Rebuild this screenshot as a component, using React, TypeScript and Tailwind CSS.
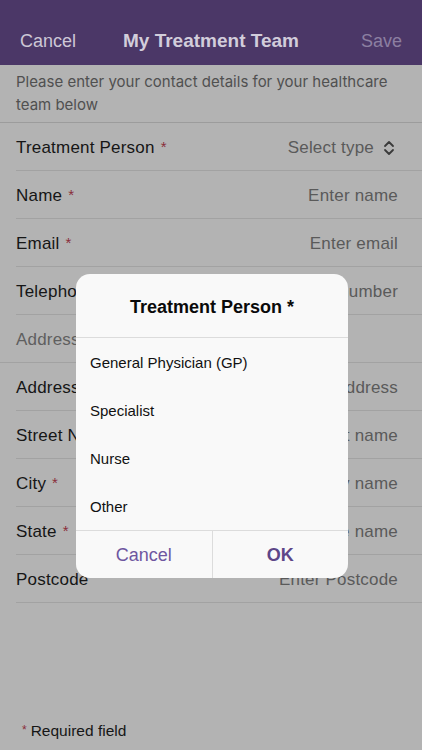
import React from "react";

const font = { fontFamily: '"Liberation Sans", Arial, sans-serif' };
const inter = { fontFamily: 'Inter, "Liberation Sans", Arial, sans-serif' };

function Row({ label, req, placeholder, chevron }: { label: string; req?: boolean; placeholder: string; chevron?: boolean }) {
  return (
    <div className="ml-4 flex h-12 items-center justify-between border-b border-[#a2a2a2] pr-6 pt-[2px]">
      <div className="flex items-center text-[17px] tracking-[0.2px] text-[#161616]">
        <span>{label}</span>
        {req && <span className="ml-[6px] text-[15px] text-[#8a2d3a]">*</span>}
      </div>
      <div className="flex items-center text-[17px] tracking-[0.2px] text-[#5a5a5a]">
        <span>{placeholder}</span>
        {chevron && (
          <svg width="14" height="16" viewBox="0 0 14 16" className="ml-[8px] mr-[2px]">
            <path d="M3 6 L7 2 L11 6 M3 10 L7 14 L11 10" fill="none" stroke="#3a3a3a" strokeWidth="1.8" strokeLinecap="round" strokeLinejoin="round" />
          </svg>
        )}
      </div>
    </div>
  );
}

export default function App() {
  return (
    <div className="relative h-[750px] w-[422px] overflow-hidden bg-[#b3b3b3]" style={font}>
      <div className="grid h-[65px] grid-cols-[1fr_auto_1fr] items-end bg-[#4b3767] px-5 pb-[10px]">
        <span className="justify-self-start text-[18px] text-[#cdc7d6]">Cancel</span>
        <span className="text-[19px] font-bold text-[#d2cddb]">My Treatment Team</span>
        <span className="justify-self-end text-[18px] text-[#8c7fa1]">Save</span>
      </div>
      <div className="h-[58px] border-b border-[#9c9c9c] px-4 pt-[5px] text-[15px] leading-[23px] text-[#505050]" style={inter}>
        Please enter your contact details for your healthcare team below
      </div>
      <Row label="Treatment Person" req placeholder="Select type" chevron />
      <Row label="Name" req placeholder="Enter name" />
      <Row label="Email" req placeholder="Enter email" />
      <Row label="Telephone" placeholder="Enter number" />
      <div className="flex h-12 items-center border-b border-[#a2a2a2] pl-4 pt-[2px] text-[17px] tracking-[0.2px] text-[#5f5f5f]">Address</div>
      <Row label="Address" placeholder="Enter address" />
      <Row label="Street Name" placeholder="Enter street name" />
      <Row label="City" req placeholder="Enter city name" />
      <Row label="State" req placeholder="Enter state name" />
      <Row label="Postcode" placeholder="Enter Postcode" />
      <div className="absolute bottom-[8px] left-[22px] flex items-center text-[15.5px] text-[#161616]">
        <span className="mr-[4px] text-[12px] text-[#8a2d3a]">*</span>
        <span>Required field</span>
      </div>

      <div className="absolute left-[76px] top-[274px] w-[272px] overflow-hidden rounded-[14px] bg-[#f9f9f9]">
        <div className="flex h-[64px] items-center justify-center border-b border-[#dcdcdc] pt-[4px] text-[18px] font-bold text-[#0a0a0a]">
          Treatment Person *
        </div>
        <div className="flex flex-col">
          {["General Physician (GP)", "Specialist", "Nurse", "Other"].map((o) => (
            <div key={o} className="flex h-12 items-center pl-[14px] pt-[2px] text-[15px] text-[#111]">
              {o}
            </div>
          ))}
        </div>
        <div className="flex h-12 border-t border-[#dcdcdc]">
          <div className="flex flex-1 items-center justify-center border-r border-[#dcdcdc] pt-[2px] text-[18px] text-[#6e56a0]">Cancel</div>
          <div className="flex flex-1 items-center justify-center pt-[2px] text-[18px] font-bold text-[#5d4688]">OK</div>
        </div>
      </div>
    </div>
  );
}
